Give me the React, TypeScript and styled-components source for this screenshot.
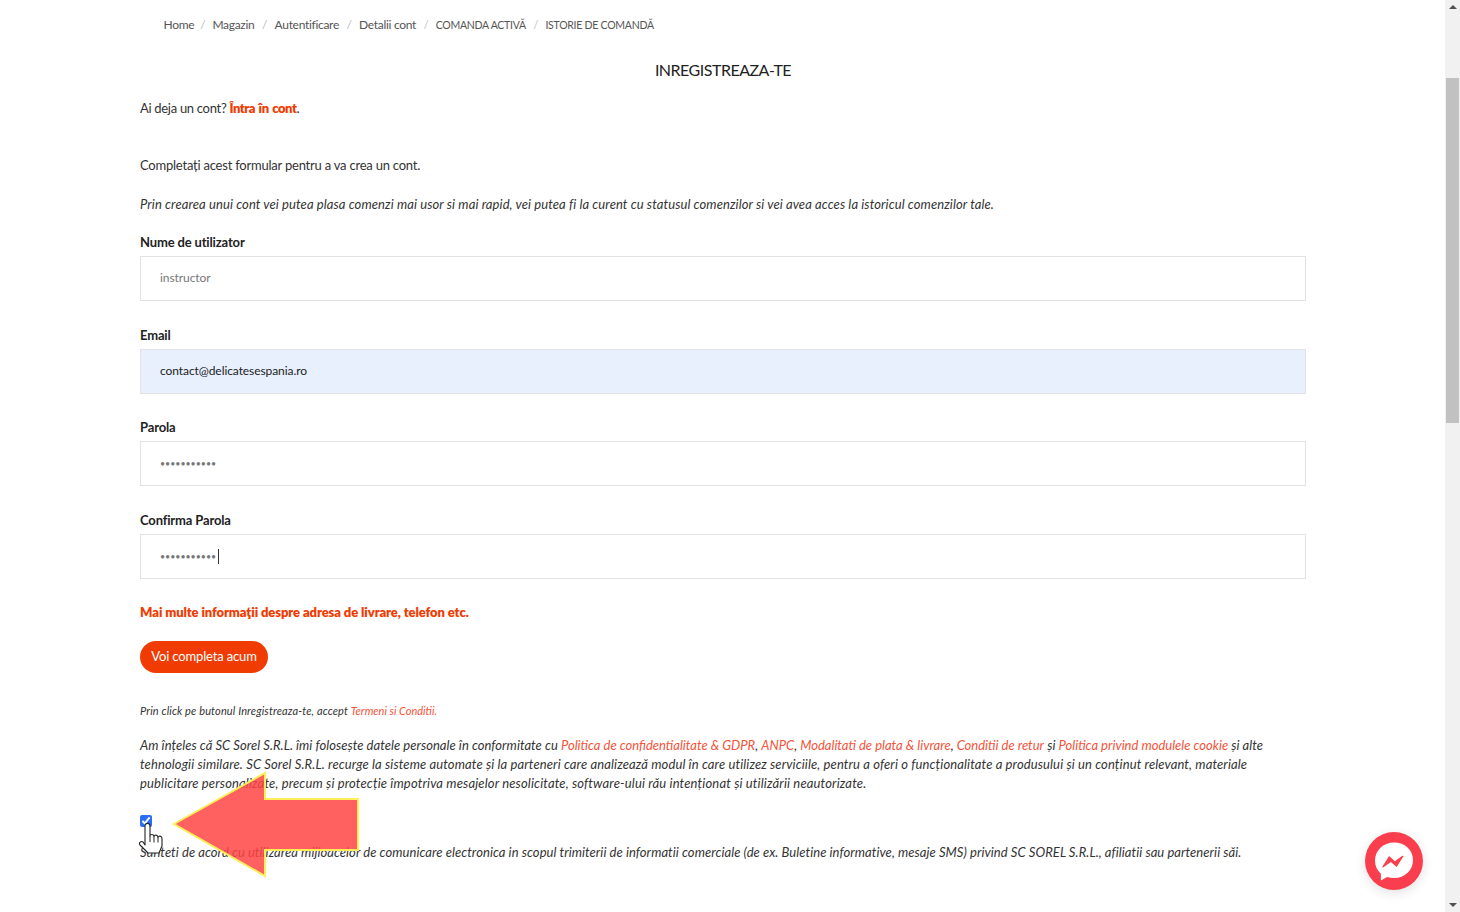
import { FC } from "react";
import styled, { createGlobalStyle } from "styled-components";

const RED = "#f03c02";
const LINK = "#f4533a";
const FONT = `"Lato", "Noto Sans", sans-serif`;

const crumbs = ["Home", "Magazin", "Autentificare", "Detalii cont", "COMANDA ACTIVĂ", "ISTORIE DE COMANDĂ"];

const GlobalStyle = createGlobalStyle`
	html, body {
		margin:0;
		padding:0;
		height:912px;
		overflow:hidden;
		background:#fff;
	}
	body {
		font-family:${ FONT };
		font-size:13px;
		color:#333;
	}
`;

const Shell = styled.div`
	display:flex;
	width:1460px;
	height:912px;
	overflow:hidden;
`;

const Page = styled.main`
	position:relative;
	flex:1;
	min-width:0;
	padding:0 139px 0 140px;
`;

const Breadcrumb = styled.ol`
	display:flex;
	align-items:center;
	list-style:none;
	margin:0;
	padding:0 0 0 23.5px;
	height:49px;
	font-size:12px;
	color:#555;
`;

const Crumb = styled.li<{ $upper?:boolean }>`
	white-space:nowrap;
	font-size:${ p => p.$upper ? 10.5 : 12 }px;
	letter-spacing:${ p => p.$upper ? -0.25 : -0.3 }px;
	&:not(:first-child)::before {
		content:"/";
		margin:0 7.5px;
		color:#bbb;
	}
	&:nth-child(2)::before {
		margin:0 7px 0 6px;
	}
`;

const Title = styled.h1`
	margin:1px 0 0;
	height:40px;
	line-height:40px;
	text-align:center;
	font-size:16px;
	font-weight:400;
	color:#222;
	letter-spacing:-0.5px;
`;

const Line = styled.p<{ $top?:number; $size?:number; $italic?:boolean; $track?:number }>`
	margin:${ p => p.$top || 0 }px 0 0;
	line-height:19px;
	font-size:${ p => p.$size || 13 }px;
	font-style:${ p => p.$italic ? "italic" : "normal" };
	letter-spacing:${ p => p.$track || 0 }px;
	white-space:nowrap;
`;

const Strong = styled.a`
	color:${ RED };
	font-weight:800;
	letter-spacing:-0.45px;
	word-spacing:1px;
	text-decoration:none;
`;

const Link = styled.a`
	color:${ LINK };
	letter-spacing:0;
	text-decoration:none;
`;

const FieldGroup = styled.div`
	position:relative;
	margin-bottom:19.7px;
`;

const Label = styled.label`
	display:block;
	height:28px;
	line-height:28px;
	font-size:13px;
	font-weight:700;
	letter-spacing:-0.15px;
	color:#222;
`;

const Input = styled.input<{ $filled?:boolean }>`
	display:block;
	box-sizing:border-box;
	width:100%;
	height:45px;
	padding:0 19px 2px;
	border:1px solid #e2e2e2;
	border-radius:0;
	outline:none;
	font-family:${ FONT };
	font-size:12px;
	letter-spacing:-0.08px;
	color:${ p => p.$filled ? "#222" : "#777" };
	background:${ p => p.$filled ? "#e8f0fe" : "#fff" };
	&[type="password"] {
		padding-bottom:0;
		font-size:8.8px;
		letter-spacing:0;
	}
`;

const Caret = styled.span`
	position:absolute;
	left:77.5px;
	top:43px;
	width:1px;
	height:15px;
	background:#333;
`;

const Fields = styled.form`
	margin-top:14px;
`;

const MoreInfo = styled.a`
	display:block;
	margin-top:23.7px;
	line-height:19px;
	color:${ RED };
	font-size:13px;
	font-weight:800;
	letter-spacing:-0.09px;
	text-decoration:none;
`;

const CompleteButton = styled.button`
	display:block;
	width:128px;
	height:32px;
	margin-top:19px;
	padding:0 0 2px;
	border:0;
	border-radius:16px;
	background:${ RED };
	color:#fff;
	font-family:${ FONT };
	font-size:13px;
	letter-spacing:-0.15px;
`;

const Consent = styled.input`
	display:block;
	width:12px;
	height:12px;
	margin:22px 0 0;
	accent-color:#2a6df4;
`;

const ArrowMark = styled.svg`
	position:absolute;
	left:170px;
	top:768px;
	width:194px;
	height:112px;
`;

const HandCursor = styled.svg`
	position:absolute;
	left:139px;
	top:823px;
	width:25px;
	height:31px;
`;

const ChatButton = styled.a`
	position:absolute;
	left:1365px;
	top:832px;
	display:flex;
	align-items:center;
	justify-content:center;
	width:58px;
	height:58px;
	border-radius:50%;
	background:#fa3e4e;
	box-shadow:0 3px 12px rgba(0,0,0,.12);
`;

const Scrollbar = styled.aside`
	display:flex;
	flex-direction:column;
	align-items:center;
	flex:none;
	width:15px;
	height:912px;
	background:#f1f1f1;
`;

const ScrollArrow = styled.div<{ $down?:boolean }>`
	flex:none;
	width:0;
	height:0;
	margin:${ p => p.$down ? "auto 0 5px" : "5px 0 0" };
	border-left:4px solid transparent;
	border-right:4px solid transparent;
	border-bottom:${ p => p.$down ? "0" : "4px solid #505050" };
	border-top:${ p => p.$down ? "4px solid #505050" : "0" };
`;

const ScrollThumb = styled.div`
	width:100%;
	height:345px;
	margin-top:69px;
	box-sizing:border-box;
	border:0 solid #f1f1f1;
	border-width:0 1px;
	background:#c1c1c1;
`;

const Messenger:FC = () => (
	<svg width="44" height="44" viewBox="0 0 44 44">
		<path fill="#fff" d="M22 3.5C11.2 3.5 3 11.4 3 21.6c0 5.4 2.2 10 5.9 13.2v6.8l6.3-3.5c2.1.6 4.4 1 6.8 1 10.8 0 19-7.9 19-18.1S32.800 3.500 22 3.500z" />
		<path fill="#fa3e4e" d="M10.500 27.500l6.600-10.400 5.800 5.100 7.400-5.400c.7-.5 1.300.2 1 .8l-6.600 10.400-5.800-5.100-7.400 5.400c-.7.500-1.300-.2-1-.8z" />
	</svg>
);

const App:FC = () => {
	return (
		<Shell>
			<GlobalStyle />
			<Page>
				<Breadcrumb>
					{ crumbs.map(c => <Crumb key={ c } $upper={ c === c.toUpperCase() }>{ c }</Crumb>) }
				</Breadcrumb>
				<Title>INREGISTREAZA-TE</Title>
				<Line $top={ 9 } $track={ -0.3 }>Ai deja un cont? <Strong href="#">Întra în cont</Strong>.</Line>
				<Line $top={ 38 } $track={ -0.22 }>Completați acest formular pentru a va crea un cont.</Line>
				<Line $top={ 20 } $italic $track={ 0.1 }>Prin crearea unui cont vei putea plasa comenzi mai usor si mai rapid, vei putea fi la curent cu statusul comenzilor si vei avea acces la istoricul comenzilor tale.</Line>

				<Fields>
					<FieldGroup>
						<Label>Nume de utilizator</Label>
						<Input readOnly value="instructor" />
					</FieldGroup>
					<FieldGroup>
						<Label>Email</Label>
						<Input readOnly $filled value="contact@delicatesespania.ro" />
					</FieldGroup>
					<FieldGroup>
						<Label>Parola</Label>
						<Input readOnly type="password" value="12345678901" />
					</FieldGroup>
					<FieldGroup>
						<Label>Confirma Parola</Label>
						<Input readOnly type="password" value="12345678901" />
						<Caret />
					</FieldGroup>
				</Fields>

				<MoreInfo href="#">Mai multe informaţii despre adresa de livrare, telefon etc.</MoreInfo>
				<CompleteButton type="button">Voi completa acum</CompleteButton>

				<Line $top={ 28 } $size={ 11 } $italic $track={ 0.14 }>Prin click pe butonul Inregistreaza-te, accept <Link href="#">Termeni si Conditii.</Link></Line>
				<Line $top={ 16 } $italic $track={ 0.04 }>
					Am înțeles că SC Sorel S.R.L. îmi folosește datele personale în conformitate cu <Link href="#">Politica de confidentialitate &amp; GDPR</Link>, <Link href="#">ANPC</Link>, <Link href="#">Modalitati de plata &amp; livrare</Link>, <Link href="#">Conditii de retur</Link> și <Link href="#">Politica privind modulele cookie</Link> și alte
				</Line>
				<Line $italic $track={ 0.12 }>tehnologii similare. SC Sorel S.R.L. recurge la sisteme automate și la parteneri care analizează modul în care utilizez serviciile, pentru a oferi o funcționalitate a produsului și un conținut relevant, materiale</Line>
				<Line $italic $track={ 0.15 }>publicitare personalizate, precum și protecție împotriva mesajelor nesolicitate, software-ului rău intenționat și utilizării neautorizate.</Line>
				<Consent type="checkbox" readOnly checked />
				<Line $top={ 16 } $italic $track={ 0.06 }>Sunteti de acord cu utilizarea mijloacelor de comunicare electronica in scopul trimiterii de informatii comerciale (de ex. Buletine informative, mesaje SMS) privind SC SOREL S.R.L., afiliatii sau partenerii săi.</Line>

				<ArrowMark viewBox="170 768 194 112">
					<polygon
					points="174,824 265,773 265,799 358,799 358,850 265,850 265,876"
					fill="#ff4444"
					fillOpacity="0.85"
					stroke="#ffee58"
					strokeWidth="2"
					/>
				</ArrowMark>
				<HandCursor viewBox="0 0 25 31">
					<path
					fill="#fff"
					stroke="#222"
					strokeWidth="1.100"
					strokeLinejoin="round"
					d="M6 3c0-3.500 5-3.500 5 0v10c0-2 4-2 4 .5 0-2 4-2 4 1 0-2 4-2 4 1V23l-3 7H9L1 22c-1.500-2 1-4.500 3-3l2 3z"
					/>
					<path fill="none" stroke="#222" strokeWidth="1" d="M11 13v6M15 13.500v6M19 14.500v5" />
				</HandCursor>
				<ChatButton href="#" aria-label="Messenger">
					<Messenger />
				</ChatButton>
			</Page>
			<Scrollbar>
				<ScrollArrow />
				<ScrollThumb />
				<ScrollArrow $down />
			</Scrollbar>
		</Shell>
	);
};

export default App;
